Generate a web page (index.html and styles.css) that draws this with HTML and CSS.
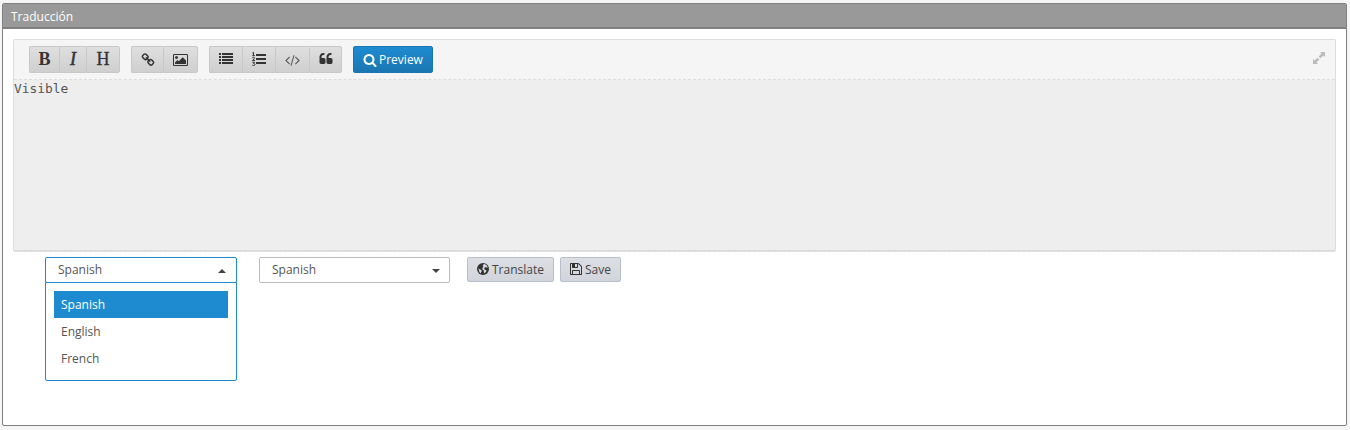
FILE: index.html
```html
<!DOCTYPE html>
<html lang="es">
<head>
<meta charset="utf-8">
<title>Traducción</title>
<link rel="stylesheet" href="styles.css">
</head>
<body>
<section class="panel">
  <header class="panel-title">Traducción</header>
  <div class="panel-body">
    <div class="editor">
      <div class="toolbar">
        <div class="group">
          <button class="tool bold w30">B</button>
          <button class="tool italic w27">I</button>
          <button class="tool heading w34">H</button>
        </div>
        <div class="group">
          <button class="tool w32"><svg class="icon" viewBox="0 0 1792 1792"><path d="M1520 1216q0-40-28-68l-208-208q-28-28-68-28-42 0-72 32 3 3 19 18.500t21.500 21.500 15 19 13 25.500 3.500 27.500q0 40-28 68t-68 28q-15 0-27.500-3.500t-25.500-13-19-15-21.500-21.500-18.500-19q-33 31-33 73 0 40 28 68l206 207q27 27 68 27 40 0 68-26l147-146q28-28 28-67zm-703-705q0-40-28-68l-206-207q-28-28-68-28-39 0-68 27l-147 146q-28 28-28 67 0 40 28 68l208 208q27 27 68 27 42 0 72-31-3-3-19-18.500t-21.500-21.500-15-19-13-25.500-3.500-27.500q0-40 28-68t68-28q15 0 27.500 3.500t25.500 13 19 15 21.500 21.500 18.500 19q33-31 33-73zm895 705q0 120-85 203l-147 146q-83 83-203 83-121 0-204-85l-206-207q-83-83-83-203 0-123 88-209l-88-88q-86 88-208 88-120 0-204-84l-208-208q-84-84-84-204t85-203l147-146q83-83 203-83 121 0 204 85l206 207q83 83 83 203 0 123-88 209l88 88q86-88 208-88 120 0 204 84l208 208q84 84 84 204z"/></svg></button>
          <button class="tool w35"><svg class="icon wide" viewBox="-64 0 1920 1792"><path d="M576 576q0 80-56 136t-136 56-136-56-56-136 56-136 136-56 136 56 56 136zm1024 384v448h-1408v-192l320-320 160 160 512-512zm96-704h-1600q-13 0-22.500 9.500t-9.500 22.500v1216q0 13 9.500 22.500t22.500 9.500h1600q13 0 22.500-9.500t9.500-22.500v-1216q0-13-9.500-22.500t-22.500-9.500zm160 32v1216q0 66-47 113t-113 47h-1600q-66 0-113-47t-47-113v-1216q0-66 47-113t113-47h1600q66 0 113 47t47 113z"/></svg></button>
        </div>
        <div class="group">
          <button class="tool w33"><svg class="icon raised" viewBox="0 0 14 14"><path d="M0 1h2v2H0zM3 1h11v2H3zM0 4h2v2H0zM3 4h11v2H3zM0 7h2v2H0zM3 7h11v2H3zM0 10h2v2H0zM3 10h11v2H3z"/></svg></button>
          <button class="tool w33"><svg class="icon raised" viewBox="0 0 14 14"><path d="M4 2h10v2H4zM4 6h10v2H4zM4 10h10v2H4z"/><path class="digits" d="M.4 1 1.500.3v3.200M.3 3.600h2.600M.4 5.700q1-.9 2 0 .3 1-1.900 2.700h2.500M.4 10.200h2.100l-1 1.300q1.400 0 1.400 1t-1.300 1q-.8 0-1.300-.5"/></svg></button>
          <button class="tool w34"><svg class="icon wide code" viewBox="-64 0 1920 1792"><path d="M553 1399l-50 50q-10 10-23 10t-23-10l-466-466q-10-10-10-23t10-23l466-466q10-10 23-10t23 10l50 50q10 10 10 23t-10 23l-393 393 393 393q10 10 10 23t-10 23zm591-1067l-373 1291q-4 13-15.500 19.500t-23.500 2.500l-62-17q-13-4-19.500-15.500t-2.500-24.500l373-1291q4-13 15.500-19.500t23.500-2.500l62 17q13 4 19.500 15.500t2.500 24.500zm657 651l-466 466q-10 10-23 10t-23-10l-50-50q-10-10-10-23t10-23l393-393-393-393q-10-10-10-23t10-23l50-50q10-10 23-10t23 10l466 466q10 10 10 23t-10 23z"/></svg></button>
          <button class="tool w33"><svg class="icon raised" viewBox="0 0 1792 1792"><path d="M832 960v384q0 80-56 136t-136 56h-384q-80 0-136-56t-56-136v-704q0-104 40.500-198.500t109.500-163.500 163.500-109.500 198.500-40.500h64q26 0 45 19t19 45v128q0 26-19 45t-45 19h-64q-106 0-181 75t-75 181v32q0 40 28 68t68 28h224q80 0 136 56t56 136zm896 0v384q0 80-56 136t-136 56h-384q-80 0-136-56t-56-136v-704q0-104 40.500-198.500t109.500-163.500 163.500-109.500 198.500-40.500h64q26 0 45 19t19 45v128q0 26-19 45t-45 19h-64q-106 0-181 75t-75 181v32q0 40 28 68t68 28h224q80 0 136 56t56 136z"/></svg></button>
        </div>
        <button class="preview"><svg class="icon" viewBox="0 0 1792 1792"><path d="M1216 832q0-185-131.500-316.500t-316.500-131.500-316.500 131.500-131.500 316.500 131.500 316.500 316.500 131.500 316.500-131.500 131.500-316.500zm512 832q0 52-38 90t-90 38q-54 0-90-38l-343-342q-179 124-399 124-143 0-273.500-55.500t-225-150-150-225-55.500-273.500 55.500-273.500 150-225 225-150 273.500-55.500 273.500 55.500 225 150 150 225 55.500 273.500q0 220-124 399l343 343q37 37 37 90z"/></svg><span>Preview</span></button>
        <svg class="expand" viewBox="0 0 12 12"><path d="M7 0h5v5l-1.600-1.600-2.900 2.900-1.800-1.800 2.900-2.900zM5 12H0V7l1.600 1.600 2.900-2.900 1.800 1.800-2.900 2.900z"/></svg>
      </div>
      <div class="text">Visible</div>
    </div>
    <div class="controls">
      <div class="select open">
        <span>Spanish</span><i class="caret up"></i>
        <ul class="menu">
          <li class="option selected">Spanish</li>
          <li class="option">English</li>
          <li class="option">French</li>
        </ul>
      </div>
      <div class="select target"><span>Spanish</span><i class="caret"></i></div>
      <button class="action translate"><svg class="icon globe" viewBox="0 0 12 14"><circle cx="6" cy="7" r="6"/><path class="land" d="M6.300 2.600 7.800 1.900l2 1.500.9 2.100-.8.300-.9-.9-1.300.5-.5 1.300.8 1.200 1.300.1-.1 1.600-1.600 1.900-.8-1.600.1-1.400-1.400-.9-.1-1.700 1.100-1.500-.9-.6zM1.400 6.300l1.300 1 1.500.7.7.9-.8 1.200-.4 1.400-1.300-1.300-.3-1.500z"/></svg><span>Translate</span></button>
      <button class="action save"><svg class="icon floppy" viewBox="128 0 1536 1792"><path d="M512 1536h768v-384h-768v384zm896 0h128v-896q0-14-10-38.500t-20-34.500l-281-281q-10-10-34-20t-39-10v416q0 40-28 68t-68 28h-576q-40 0-68-28t-28-68v-416h-128v1280h128v-416q0-40 28-68t68-28h832q40 0 68 28t28 68v416zm-384-928v-320q0-13-9.500-22.500t-22.500-9.500h-192q-13 0-22.500 9.500t-9.500 22.500v320q0 13 9.500 22.500t22.500 9.500h192q13 0 22.500-9.500t9.500-22.500zm640 32v928q0 40-28 68t-68 28h-1344q-40 0-68-28t-28-68v-1344q0-40 28-68t68-28h928q40 0 88 20t76 48l280 280q28 28 48 76t20 88z"/></svg><span>Save</span></button>
    </div>
  </div>
</section>
</body>
</html>
```
FILE: styles.css
```css
* { box-sizing: border-box; }
body {
  margin: 0;
  padding: 3px 3px 4px 2px;
  height: 430px;
  overflow: hidden;
  background: #f5f5f5;
  color: #555;
  font: 12px/18px "Open Sans", sans-serif;
}
button { margin: 0; padding: 0; font: inherit; color: inherit; }
.panel {
  height: 423px;
  border: 1px solid #808080;
  border-radius: 2px;
  background: #fff;
}
.panel-title {
  height: 25px;
  padding: 4px 8px 0;
  background: #999;
  border-bottom: 2px solid #808080;
  color: #fff;
}
.panel-body { padding: 10px; }
.editor {
  height: 213px;
  border: 1px solid #ddd;
  border-bottom: 2px solid #e0e0e0;
  border-radius: 2px;
  background: #eee;
}
.toolbar {
  display: flex;
  gap: 11px;
  height: 40px;
  padding: 6px 10px 0 15px;
  border-bottom: 1px dashed #ddd;
  background: #f5f5f5;
}
.group {
  display: flex;
  height: 27px;
}
.tool {
  display: flex;
  align-items: center;
  justify-content: center;
  height: 27px;
  border: 1px solid #c8c8c8;
  border-right-width: 0;
  background: linear-gradient(#dfdfdf, #cfcfcf);
  color: #333;
}
.tool:first-child { border-radius: 2px 0 0 2px; }
.tool:last-child { border-right-width: 1px; border-radius: 0 2px 2px 0; }
.w27 { width: 27px; }
.w30 { width: 30px; }
.w32 { width: 32px; }
.w33 { width: 33px; }
.w34 { width: 34px; }
.w35 { width: 35px; }
.bold, .italic, .heading { padding-bottom: 1px; font: 18px/24px "Liberation Serif", serif; }
.bold { font-weight: bold; }
.italic { font-style: italic; -webkit-text-stroke: .5px #333; }
.heading { -webkit-text-stroke: .3px #333; }
.icon { display: block; flex: none; width: 14px; height: 14px; fill: currentColor; }
.raised { margin-bottom: 2px; }
.wide { width: 15px; }
.code { fill: #555; }
.digits { fill: none; stroke: #333; stroke-width: 1; }
.preview {
  display: flex;
  align-items: center;
  gap: 2px;
  width: 80px;
  height: 27px;
  padding-left: 9px;
  border: 1px solid #1a76b3;
  border-radius: 2px;
  background: linear-gradient(#1e8bd1, #1b76b2);
  color: #fff;
}
.expand { width: 12px; height: 12px; margin: 6px 0 0 auto; fill: #bbb; }
.text {
  height: 171px;
  border-bottom: 1px dashed #d8d8d8;
  font: 12.900px/18px "DejaVu Sans Mono", monospace;
}
.controls { display: flex; padding: 5px 0 0 32px; }
.select {
  position: relative;
  display: flex;
  align-items: center;
  justify-content: space-between;
  width: 191px;
  height: 26px;
  padding: 0 9px 0 12px;
  border: 1px solid #bbb;
  border-radius: 2px;
}
.open { width: 192px; padding-right: 10px; border-color: #1d89cf; }
.target { margin-left: 22px; }
.caret {
  border: 4px solid transparent;
  border-top-color: #444;
  border-bottom: 0;
  margin-top: 2px;
}
.caret.up { border-top: 0; border-bottom: 4px solid #444; }
.menu {
  position: absolute;
  top: 24px;
  left: -1px;
  width: 192px;
  height: 99px;
  margin: 0;
  padding: 8px;
  border: 1px solid #1d89cf;
  border-radius: 0 0 2px 2px;
  background: #fff;
  list-style: none;
}
.option { height: 27px; padding: 0 7px; line-height: 27px; }
.selected { background: #1e8bd1; color: #fff; }
.action {
  display: flex;
  align-items: center;
  gap: 3px;
  height: 25px;
  padding-left: 9px;
  border: 1px solid #b8bfcc;
  border-radius: 2px;
  background: linear-gradient(#dddfe3, #d1d4db);
  color: #444;
}
.translate { width: 87px; margin-left: 17px; }
.save { width: 61px; margin-left: 6px; }
.globe, .floppy { width: 12px; margin-bottom: 1px; fill: #333; }
.land { fill: #d9dbe0; }
```
